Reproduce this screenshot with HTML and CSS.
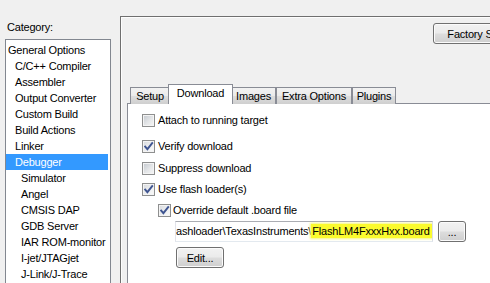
FILE: index.html
```html
<!DOCTYPE html>
<html>
<head>
<meta charset="utf-8">
<link rel="stylesheet" href="styles.css">
</head>
<body>
<div class="app">
  <div class="side">
    <div class="label">Category:</div>
    <ul class="list">
      <li class="l0">General Options</li>
      <li class="l1">C/C++ Compiler</li>
      <li class="l1">Assembler</li>
      <li class="l1">Output Converter</li>
      <li class="l1">Custom Build</li>
      <li class="l1">Build Actions</li>
      <li class="l1">Linker</li>
      <li class="l1 sel">Debugger</li>
      <li class="l2">Simulator</li>
      <li class="l2">Angel</li>
      <li class="l2">CMSIS DAP</li>
      <li class="l2">GDB Server</li>
      <li class="l2">IAR ROM-monitor</li>
      <li class="l2">I-jet/JTAGjet</li>
      <li class="l2">J-Link/J-Trace</li>
    </ul>
  </div>
  <div class="main">
    <div class="toolbar"><button class="btn factory">Factory Settings</button></div>
    <div class="tabs">
      <div class="tab t-setup">Setup</div>
      <div class="tab t-download active">Download</div>
      <div class="tab t-images">Images</div>
      <div class="tab t-extra">Extra Options</div>
      <div class="tab t-plugins">Plugins</div>
    </div>
    <div class="page">
      <div class="row r-attach"><span class="cb"></span><span>Attach to running target</span></div>
      <div class="row r-verify"><span class="cb checked"><svg viewBox="0 0 11 11" width="11" height="11"><path d="M2.2 5.6 L4.4 8.2 L9.2 2.2" fill="none" stroke="#3f5591" stroke-width="1.9" stroke-linecap="square"/></svg></span><span>Verify download</span></div>
      <div class="row r-suppress"><span class="cb"></span><span>Suppress download</span></div>
      <div class="row r-flash"><span class="cb checked"><svg viewBox="0 0 11 11" width="11" height="11"><path d="M2.2 5.6 L4.4 8.2 L9.2 2.2" fill="none" stroke="#3f5591" stroke-width="1.9" stroke-linecap="square"/></svg></span><span>Use flash loader(s)</span></div>
      <div class="row r-override"><span class="cb checked"><svg viewBox="0 0 11 11" width="11" height="11"><path d="M2.2 5.6 L4.4 8.2 L9.2 2.2" fill="none" stroke="#3f5591" stroke-width="1.9" stroke-linecap="square"/></svg></span><span>Override default .board file</span></div>
      <div class="pathrow">
        <div class="input">ashloader\TexasInstruments\<span class="hl">FlashLM4FxxxHxx.board</span></div>
        <button class="btn dots">...</button>
      </div>
      <div class="editrow"><button class="btn edit">Edit...</button></div>
    </div>
  </div>
</div>
</body>
</html>
```
FILE: styles.css
```css
* { box-sizing: border-box; }
html, body {
  margin: 0;
  padding: 0;
  width: 490px;
  height: 283px;
  overflow: hidden;
  background: #f0f0f0;
  font-family: "Liberation Sans", Arial, sans-serif;
  font-size: 11px;
  letter-spacing: -0.2px;
  color: #000;
}
.app {
  display: flex;
  align-items: flex-start;
}
.side {
  flex: none;
  width: 120px;
}
.label {
  margin-top: 21px;
  padding-left: 7px;
  height: 13px;
  line-height: 13px;
}
.list {
  list-style: none;
  margin: 5px 0 0 5px;
  padding: 2px 0 0 0;
  width: 106px;
  height: 260px;
  background: #fff;
  border: 1px solid #828790;
  overflow: hidden;
}
.list li {
  height: 16px;
  line-height: 16px;
  white-space: nowrap;
  margin-right: 2px;
}
.l0 { padding-left: 2px; }
.l1 { padding-left: 9px; }
.l2 { padding-left: 15px; }
.list .sel {
  background: #3399ff;
  color: #fff;
}
.main {
  flex: none;
  margin-top: 16px;
  width: 400px;
  height: 300px;
  border: 1px solid #6f6f6f;
  box-shadow: inset 1px 1px 0 #fdfdfd;
  padding: 6px 0 0 6px;
}
.toolbar {
  display: flex;
  padding-left: 306px;
  height: 21px;
}
.btn {
  font-family: inherit;
  font-size: 11px;
  letter-spacing: -0.2px;
  color: #000;
  height: 21px;
  padding: 0;
  border: 1px solid #707070;
  border-radius: 3px;
  background: linear-gradient(#f2f2f2 0%, #ebebeb 48%, #dddddd 52%, #cfcfcf 100%);
  box-shadow: inset 0 0 0 1px #fbfbfb;
  text-align: center;
  white-space: nowrap;
}
.factory { flex: none; width: 105px; }
.tabs {
  display: flex;
  align-items: flex-end;
  height: 20px;
  margin-top: 40px;
  margin-bottom: -1px;
  padding-left: 3px;
}
.tab {
  flex: none;
  height: 17px;
  line-height: 16px;
  text-align: center;
  white-space: nowrap;
  border: 1px solid #898c95;
  border-bottom: 0;
  background: linear-gradient(#f2f2f2 0%, #ebebeb 48%, #dddddd 52%, #cfcfcf 100%);
}
.tab.active {
  height: 20px;
  line-height: 17px;
  margin: 0 -2px;
  background: #fff;
  position: relative;
  z-index: 1;
}
.t-setup { width: 40px; }
.t-download { width: 65px; }
.t-images { width: 45px; }
.t-extra { width: 76px; }
.t-plugins { width: 44px; }
.page {
  width: 380px;
  height: 200px;
  background: #fff;
  border: 1px solid #898c95;
  padding-left: 14px;
}
.row {
  display: flex;
  align-items: center;
  height: 13px;
  line-height: 13px;
  gap: 3px;
  white-space: nowrap;
}
.r-attach { margin-top: 10px; }
.r-verify { margin-top: 13px; }
.r-suppress { margin-top: 9px; }
.r-flash { margin-top: 8px; }
.r-override { margin-top: 8px; margin-left: 16px; gap: 2px; }
.cb {
  flex: none;
  width: 13px;
  height: 13px;
  border: 1px solid #8e8f8f;
  background: linear-gradient(135deg, #c3c8ce 0%, #e4e6e8 55%, #f7f7f7 100%);
  box-shadow: inset 0 0 0 1px #f4f4f4;
  display: flex;
}
.cb.checked {
  background: linear-gradient(135deg, #d6d9dd 0%, #eeeff0 55%, #fafafa 100%);
}
.pathrow {
  display: flex;
  gap: 5px;
  margin-top: 4px;
  margin-left: 33px;
}
.input {
  flex: none;
  width: 258px;
  height: 21px;
  line-height: 19px;
  background: #fff;
  border: 1px solid;
  border-color: #abadb3 #dbdfe6 #e3e9ef #e2e3ea;
  white-space: nowrap;
  overflow: hidden;
}
.hl {
  background: #fbfb2e;
  box-shadow: 0 0 2px 1px #f6f67a;
  padding: 1px 2px 1px 1px;
}
.dots { flex: none; width: 28px; }
.editrow {
  margin-top: 5px;
  margin-left: 34px;
}
.edit { width: 48px; }
```
